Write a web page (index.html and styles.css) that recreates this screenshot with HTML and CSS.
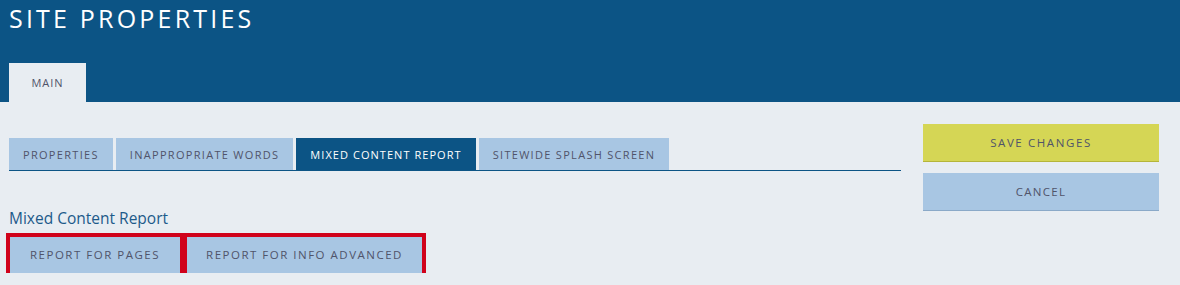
FILE: index.html
```html
<!DOCTYPE html>
<html>
<head>
<meta charset="utf-8">
<link rel="stylesheet" href="styles.css">
</head>
<body>
<header class="header">
  <h1 class="title">SITE PROPERTIES</h1>
  <nav class="main-tabs">
    <span class="main-tab">MAIN</span>
  </nav>
</header>
<div class="content">
  <div class="left">
    <div class="tabs">
      <span class="tab">PROPERTIES</span>
      <span class="tab">INAPPROPRIATE WORDS</span>
      <span class="tab active">MIXED CONTENT REPORT</span>
      <span class="tab">SITEWIDE SPLASH SCREEN</span>
    </div>
    <div class="section-label">Mixed Content Report</div>
    <div class="report-buttons">
      <span class="report-btn btn-pages">REPORT FOR PAGES</span>
      <span class="report-btn btn-info">REPORT FOR INFO ADVANCED</span>
    </div>
  </div>
  <div class="right">
    <span class="action save">SAVE CHANGES</span>
    <span class="action cancel">CANCEL</span>
  </div>
</div>
</body>
</html>
```

FILE: styles.css
```css
html, body {
  margin: 0;
  padding: 0;
  background: #e8edf2;
  font-family: "Open Sans", "Noto Sans", sans-serif;
}
.header {
  background: #0c5485;
  height: 102px;
  padding-left: 9px;
  display: flex;
  flex-direction: column;
  justify-content: space-between;
  box-sizing: border-box;
}
.title {
  margin: 0;
  color: #ffffff;
  font-weight: 400;
  font-size: 25px;
  line-height: 36px;
  letter-spacing: 3.2px;
}
.main-tabs {
  display: flex;
}
.main-tab {
  width: 77px;
  height: 39px;
  background: #e8edf2;
  color: #50546a;
  font-size: 11px;
  letter-spacing: 1px;
  display: flex;
  align-items: center;
  justify-content: center;
}
.content {
  display: flex;
  gap: 22px;
  padding: 22px 21px 0 9px;
}
.left {
  flex: 1;
  padding-top: 14px;
}
.tabs {
  display: flex;
  gap: 3px;
  border-bottom: 1px solid #0c5485;
}
.tab {
  height: 32px;
  padding: 0 14px;
  background: #a8c6e3;
  color: #50546a;
  font-size: 11px;
  letter-spacing: 1.3px;
  display: flex;
  align-items: center;
}
.tab.active {
  background: #0c5485;
  color: #ffffff;
  letter-spacing: 1.05px;
}
.section-label {
  margin-top: 37px;
  color: #1d5a8a;
  font-size: 15.5px;
  line-height: 20px;
}
.report-buttons {
  display: flex;
  gap: 7px;
  margin-top: 9px;
  margin-left: 1px;
}
.report-btn {
  height: 36px;
  padding-bottom: 1px;
  box-sizing: border-box;
  background: #a8c6e3;
  color: #50546a;
  font-size: 11.5px;
  letter-spacing: 1.5px;
  display: flex;
  align-items: center;
  justify-content: center;
  outline: 4px solid #d0021b;
}
.btn-pages { width: 170px; }
.btn-info { width: 235px; }
.right {
  width: 236px;
  display: flex;
  flex-direction: column;
  gap: 11px;
}
.action {
  height: 37px;
  display: flex;
  align-items: center;
  justify-content: center;
  font-size: 11.5px;
  letter-spacing: 1.6px;
  color: #50546a;
}
.save {
  background: #d5d655;
  border-bottom: 1px solid #b5b53a;
}
.cancel {
  background: #a8c6e3;
  border-bottom: 1px solid #8aa9c8;
  letter-spacing: 1.3px;
}
```
